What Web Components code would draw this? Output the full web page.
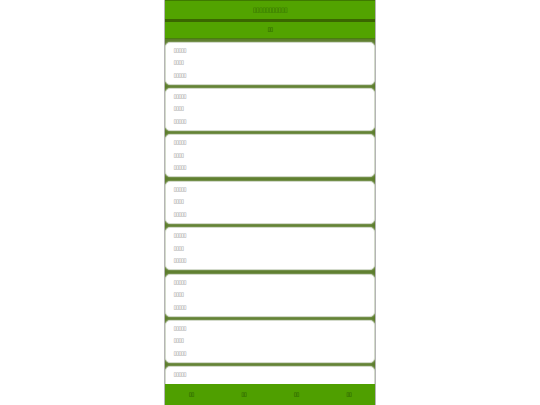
<!DOCTYPE html>
<html>
<head>
<meta charset="utf-8">
<title>app</title>
<style>
html, body { margin: 0; height: 100%; background: #fff; overflow: hidden; }
</style>
</head>
<body>
<app-shell>
    <top-bar slot="top" title-text="▯▯▯▯▯▯▯▯▯▯▯" tab="▯▯"></top-bar>
    <info-card></info-card>
    <info-card></info-card>
    <info-card></info-card>
    <info-card></info-card>
    <info-card></info-card>
    <info-card></info-card>
    <info-card></info-card>
    <info-card></info-card>
    <bottom-nav slot="bottom"></bottom-nav>
</app-shell>
<script>
class AppShell extends HTMLElement
{
    constructor() {
        super()
        const shadow = this.attachShadow({ mode: 'open' })
        shadow.innerHTML = `
        <style>
        :host {
            display: flex;
            flex-direction: column;
            box-sizing: border-box;
            width: 212px;
            height: 405px;
            margin: 0 auto;
            border-left: 1px solid #b5b5b5;
            border-right: 1px solid #b5b5b5;
            font-family: "DejaVu Sans", sans-serif;
        }
        .list {
            flex: 1;
            min-height: 0;
            overflow: hidden;
            display: flex;
            flex-direction: column;
            gap: 3.4px;
            padding-top: 2.6px;
            background: #5c7d2c;
        }
        </style>
        <slot name="top"></slot>
        <div class="list"><slot></slot></div>
        <slot name="bottom"></slot>
        `
    }
}

class TopBar extends HTMLElement
{
    constructor() {
        super()
        const shadow = this.attachShadow({ mode: 'open' })
        shadow.innerHTML = `
        <style>
        :host {
            display: block;
            flex: none;
        }
        .title, .tab {
            display: flex;
            align-items: center;
            justify-content: center;
            background: #52a300;
        }
        .title {
            height: 17px;
            padding-bottom: 1px;
            border-top: 1px solid #3f7a00;
            font-size: 6.8px;
            letter-spacing: -.6px;
            color: #2a6000;
        }
        .tab {
            height: 14px;
            border-top: 3px solid #3a6600;
            border-bottom: 1px solid #4a7d10;
            padding-bottom: 2px;
            font-size: 5.6px;
            letter-spacing: -.55px;
            color: #143c00;
        }
        </style>
        <div class="title"></div>
        <div class="tab"></div>
        `
        shadow.querySelector('.title').textContent = this.getAttribute('title-text')
        shadow.querySelector('.tab').textContent = this.getAttribute('tab')
    }
}

class InfoCard extends HTMLElement
{
    constructor() {
        super()
        const shadow = this.attachShadow({ mode: 'open' })
        shadow.innerHTML = `
        <style>
        :host {
            display: flex;
            flex: none;
            flex-direction: column;
            justify-content: space-between;
            box-sizing: border-box;
            height: 43px;
            padding: 4px 7.5px 6px;
            background: #fff;
            border: 1px solid #d3dacb;
            border-radius: 5px;
            box-shadow: 0 0 2px rgba(255, 255, 255, .55);
            font-size: 5.6px;
            letter-spacing: -.55px;
            line-height: 6px;
            color: #777;
        }
        </style>
        <div>▯▯▯▯▯</div>
        <div>▯▯▯▯</div>
        <div>▯▯▯▯▯</div>
        `
    }
}

class BottomNav extends HTMLElement
{
    constructor() {
        super()
        const shadow = this.attachShadow({ mode: 'open' })
        shadow.innerHTML = `
        <style>
        :host {
            display: grid;
            grid-template-columns: repeat(4, 1fr);
            align-items: center;
            justify-items: center;
            flex: none;
            height: 21px;
            padding-bottom: 2px;
            box-sizing: border-box;
            background: #4f9f00;
            font-size: 5.6px;
            letter-spacing: -.55px;
            color: #143c00;
        }
        </style>
        <div>▯▯</div><div>▯▯</div><div>▯▯</div><div>▯▯</div>
        `
    }
}

customElements.define('app-shell', AppShell)
customElements.define('top-bar', TopBar)
customElements.define('info-card', InfoCard)
customElements.define('bottom-nav', BottomNav)
</script>
</body>
</html>
